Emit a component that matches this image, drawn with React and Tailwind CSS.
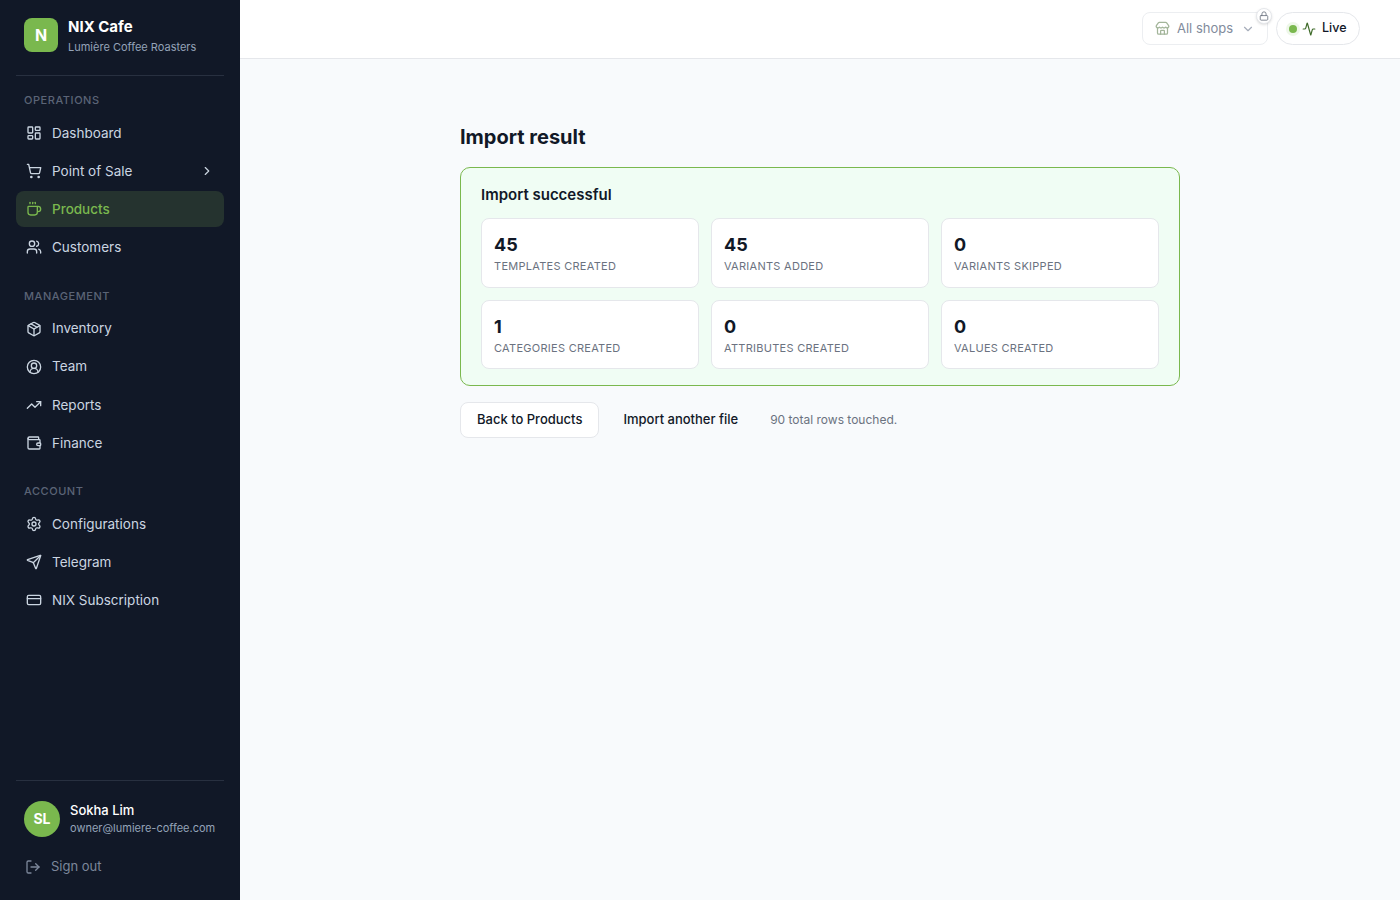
import React from "react";
import {
  LayoutDashboard,
  ShoppingCart,
  Coffee,
  Users,
  Package,
  CircleUserRound,
  TrendingUp,
  Wallet,
  Settings,
  Send,
  CreditCard,
  LogOut,
  ChevronRight,
  ChevronDown,
  Store,
  Lock,
  Activity,
} from "lucide-react";

const sections = [
  {
    title: "OPERATIONS",
    items: [
      { label: "Dashboard", icon: LayoutDashboard },
      { label: "Point of Sale", icon: ShoppingCart, chevron: true },
      { label: "Products", icon: Coffee, active: true },
      { label: "Customers", icon: Users },
    ],
  },
  {
    title: "MANAGEMENT",
    items: [
      { label: "Inventory", icon: Package },
      { label: "Team", icon: CircleUserRound },
      { label: "Reports", icon: TrendingUp },
      { label: "Finance", icon: Wallet },
    ],
  },
  {
    title: "ACCOUNT",
    items: [
      { label: "Configurations", icon: Settings },
      { label: "Telegram", icon: Send },
      { label: "NIX Subscription", icon: CreditCard },
    ],
  },
];

const stats = [
  { value: "45", label: "Templates created" },
  { value: "45", label: "Variants added" },
  { value: "0", label: "Variants skipped" },
  { value: "1", label: "Categories created" },
  { value: "0", label: "Attributes created" },
  { value: "0", label: "Values created" },
];

const NavItem = ({ item }) => {
  const Icon = item.icon;
  return (
    <a
      href="#"
      className={
        item.active
          ? "flex h-[36.1px] items-center gap-[10px] rounded-lg bg-[#25332f] px-[10px] text-[13.5px] font-medium text-[#7ab84e]"
          : "flex h-[36.1px] items-center gap-[10px] rounded-lg px-[10px] text-[13.5px] font-normal text-[#cbd5e1]"
      }
    >
      <Icon size={16} strokeWidth={2} className="shrink-0" />
      <span>{item.label}</span>
      {item.chevron && <ChevronRight size={14} className="ml-auto" />}
    </a>
  );
};

const Sidebar = () => {
  return (
    <aside className="flex h-full w-[240px] shrink-0 flex-col bg-[#111827] px-4">
      {/* Brand */}
      <div className="flex h-[76px] items-center gap-[10px] border-b border-[#283040] px-2 pb-[5px]">
        <div className="flex h-[34px] w-[34px] items-center justify-center rounded-lg bg-[#7ab84e] text-base font-bold text-white">
          N
        </div>
        <div className="pt-[2px]">
          <div className="text-[15px] leading-5 font-bold text-white">NIX Cafe</div>
          <div className="mt-[2px] text-[11px] leading-4 text-[#94a3b8]">
            Lumière Coffee Roasters
          </div>
        </div>
      </div>

      {/* Nav */}
      <nav className="flex-1 pt-[15px]">
        {sections.map((section) => (
          <div key={section.title} className="mb-[21.1px]">
            <div className="flex h-[18px] items-center px-2 pt-[0.6px] text-[11px] font-medium tracking-[0.05em] text-[#5b6476]">
              {section.title}
            </div>
            <div className="mt-[6px] flex flex-col gap-[2px]">
              {section.items.map((item) => (
                <NavItem key={item.label} item={item} />
              ))}
            </div>
          </div>
        ))}
      </nav>

      {/* User */}
      <div className="border-t border-[#283040] px-2 pt-5 pb-4">
        <div className="flex items-center gap-[10px]">
          <div className="flex h-9 w-9 items-center justify-center rounded-full bg-[#7ab84e] text-sm font-bold text-white">
            SL
          </div>
          <div className="-mt-[1px]">
            <div className="text-[13px] leading-[18px] font-medium text-white">Sokha Lim</div>
            <div className="mt-[1px] text-[11px] leading-4 text-[#94a3b8]">
              owner@lumiere-coffee.com
            </div>
          </div>
        </div>
        <button className="mt-[13px] flex h-[34px] items-center gap-[10px] pl-[1px] text-[13px] text-[#7c879a]">
          <LogOut size={16} strokeWidth={2} />
          Sign out
        </button>
      </div>
    </aside>
  );
};

const Topbar = () => {
  return (
    <header className="flex h-[59px] shrink-0 items-center justify-end gap-2 border-b border-[#e5e7eb] bg-white pr-10 pb-[1px]">
      <div className="relative">
        <button className="flex h-[33px] w-[126px] items-center rounded-lg border border-[#eceef1] px-3 text-[13px] text-[#828b9c]">
          <Store size={15} strokeWidth={2} className="mr-[7px] text-[#a3b59a]" />
          All shops
          <ChevronDown size={14} strokeWidth={2} className="ml-auto text-[#a6adba]" />
        </button>
        <span className="absolute -top-1 -right-1 flex h-4 w-4 items-center justify-center rounded-full border border-[#e5e7eb] bg-white text-[#6b7280] shadow-sm">
          <Lock size={10} strokeWidth={2} />
        </span>
      </div>
      <div className="flex h-[33px] w-[84px] items-center rounded-full border border-[#e5e7eb] pl-3 text-[12.5px] font-medium text-[#111827]">
        <span className="mr-[5px] h-2 w-2 rounded-full bg-[#7ab84e] shadow-[0_0_0_3px_#eef7e9]" />
        <Activity size={14} strokeWidth={2} className="mr-[6px] text-[#3f6b2a]" />
        Live
      </div>
    </header>
  );
};

const StatCard = ({ value, label }) => {
  return (
    <div className="h-[69.5px] rounded-lg border border-[#e5e7eb] bg-white px-3 pt-[14px]">
      <div className="text-lg leading-6 font-bold text-[#111827]">{value}</div>
      <div className="mt-[1px] text-[11px] leading-4 tracking-[0.025em] text-[#6b7280] uppercase">
        {label}
      </div>
    </div>
  );
};

export default function App() {
  return (
    <div className="flex h-[900px] overflow-hidden bg-[#f8fafc] font-['Inter',sans-serif]">
      <Sidebar />
      <main className="flex min-w-0 flex-1 flex-col">
        <Topbar />
        <div className="mx-auto w-[720px] pt-[64px]">
          <h1 className="text-xl leading-7 font-bold text-[#111827]">Import result</h1>
          <section className="mt-4 rounded-[10px] border border-[#7ab84e] bg-[#f0fdf4] px-5 pt-[17px] pb-4">
            <h2 className="text-[15px] leading-[20px] font-semibold text-[#111827]">
              Import successful
            </h2>
            <div className="mt-[13px] grid grid-cols-3 gap-3">
              {stats.map((stat) => (
                <StatCard key={stat.label} value={stat.value} label={stat.label} />
              ))}
            </div>
          </section>
          <div className="mt-4 flex items-center">
            <button className="h-9 rounded-lg border border-[#e5e7eb] bg-white px-4 text-[13px] font-medium text-[#111827]">
              Back to Products
            </button>
            <button className="ml-6 text-[13px] font-medium text-[#111827]">
              Import another file
            </button>
            <span className="ml-8 text-xs text-[#6b7280]">90 total rows touched.</span>
          </div>
        </div>
      </main>
    </div>
  );
}
